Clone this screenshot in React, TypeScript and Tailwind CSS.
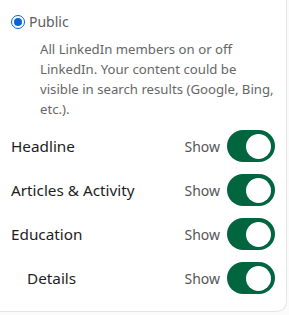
const rows = [
  { label: "Headline", indent: false },
  { label: "Articles & Activity", indent: false },
  { label: "Education", indent: false },
  { label: "Details", indent: true },
];

function Toggle() {
  return (
    <div className="flex h-[32px] w-[48px] items-center justify-end rounded-full bg-[#01653f] pr-[4px]">
      <div className="h-[25px] w-[25px] rounded-full bg-white" />
    </div>
  );
}

export default function App() {
  return (
    <div className="h-[315px] w-[289px] bg-[#fbfbfb] font-['Segoe_UI','Noto_Sans',sans-serif]">
      <div className="h-[312px] w-[287px] rounded-br-[10px] border-r border-b border-[#e6e6e6] bg-white pt-[12px] pl-[11px] pr-[11px]">
        <div className="flex items-center gap-[4px]">
          <div className="flex h-[14px] w-[14px] items-center justify-center rounded-full border-[1.5px] border-[#0a64d8]">
            <div className="h-[8px] w-[8px] rounded-full bg-[#0a64d8]" />
          </div>
          <span className="text-[14px] leading-[20px] text-[#5e5e5e]">Public</span>
        </div>
        <p className="mt-[7px] pl-[29px] text-[13.2px] leading-[20px] text-[#666666]">
          All LinkedIn members on or off LinkedIn. Your content could be visible in search results (Google, Bing, etc.).
        </p>
        <div className="mt-[11px] flex flex-col gap-[12px]">
          {rows.map((row) => (
            <div key={row.label} className="flex items-center">
              <span
                className={`flex-1 text-[15.3px] text-[#1d1d1d] ${row.indent ? "pl-[16px]" : ""}`}
              >
                {row.label}
              </span>
              <span className="mr-[7px] text-[14px] text-[#555555]">Show</span>
              <Toggle />
            </div>
          ))}
        </div>
      </div>
    </div>
  );
}
